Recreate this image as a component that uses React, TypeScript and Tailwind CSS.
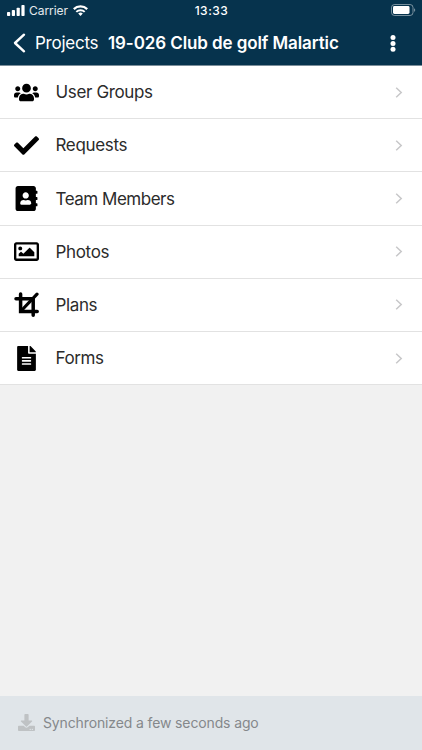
import type { ComponentType } from "react";
import { FaUsers, FaCheck, FaAddressBook, FaRegImage, FaFileAlt, FaDownload } from "react-icons/fa";

type Row = { label: string; Icon: ComponentType<{ className?: string }>; tracking: string };

function PlansIcon({ className }: { className?: string }) {
  return (
    <svg className={className} viewBox="0 0 25 25" fill="none" stroke="currentColor" strokeWidth="3.5" strokeLinecap="round">
      <path d="M6.6 2v17.4H23.2" />
      <path d="M2 6.8h17.2V23.2" />
      <path d="M23 2.2 7 19" strokeWidth="3.2" />
    </svg>
  );
}

const rows: Row[] = [
  { label: "User Groups", Icon: FaUsers, tracking: "tracking-[-0.36px]" },
  { label: "Requests", Icon: FaCheck, tracking: "tracking-[-0.34px]" },
  { label: "Team Members", Icon: FaAddressBook, tracking: "tracking-[-0.48px]" },
  { label: "Photos", Icon: FaRegImage, tracking: "tracking-[-0.34px]" },
  { label: "Plans", Icon: PlansIcon, tracking: "tracking-[-0.38px]" },
  { label: "Forms", Icon: FaFileAlt, tracking: "tracking-[-0.38px]" },
];

function StatusBar() {
  return (
    <div className="grid h-[21px] grid-cols-3 items-center pl-[7px] pr-[6px]">
      <div className="flex items-center">
        <svg className="h-[11px] w-[18px]" viewBox="0 0 18 11" fill="white">
          <rect x="0" y="7" width="3.2" height="4" rx="0.8" />
          <rect x="4.8" y="5" width="3.2" height="6" rx="0.8" />
          <rect x="9.6" y="2.7" width="3.2" height="8.3" rx="0.8" />
          <rect x="14.4" y="0" width="3.2" height="11" rx="0.8" />
        </svg>
        <span className="ml-[4px] w-[40px] pt-px text-[12px] tracking-[-0.05px] text-white/90">Carrier</span>
        <svg className="ml-[4px] h-[11px] w-[15px]" viewBox="0 0 15 11" fill="none" stroke="white">
          <path d="M0.8 4.1a9.5 9.5 0 0 1 13.4 0" strokeWidth="2.3" />
          <path d="M3.3 6.9a6 6 0 0 1 8.4 0" strokeWidth="2" />
          <path d="M7.5 10.9 5.2 8.5a3.3 3.3 0 0 1 4.6 0z" fill="white" stroke="none" />
        </svg>
      </div>
      <span className="pt-px text-center text-[12px] font-medium tracking-[0.5px] text-white">13:33</span>
      <svg className="mb-[1px] h-[12px] w-[25px] justify-self-end" viewBox="0 0 25 12" fill="none">
        <rect x="0.5" y="0.5" width="21.5" height="11" rx="3" stroke="white" strokeOpacity="0.45" />
        <rect x="2" y="2" width="16.5" height="8" rx="1.4" fill="white" />
        <path d="M23.2 4.2c1.3.5 1.3 3.1 0 3.6z" fill="white" fillOpacity="0.55" />
      </svg>
    </div>
  );
}

export default function App() {
  return (
    <div className="flex h-[750px] w-[422px] flex-col overflow-hidden bg-[#f1f1f1] font-['Inter',sans-serif]">
      <header className="h-[66px] shrink-0 border-b border-[#7b8e9a] bg-[#06334d]">
        <StatusBar />
        <div className="flex h-[44px] items-center pl-[13px] pr-[26px] text-[17px] text-white">
          <svg className="h-[20px] w-[13px]" viewBox="0 0 13 20" fill="none" stroke="white" strokeWidth="2.4" strokeLinecap="round" strokeLinejoin="round">
            <path d="M11 1.7 2 10l9 8.3" />
          </svg>
          <span className="ml-[9px] w-[73px] whitespace-nowrap pt-[2px] tracking-[-0.25px]">Projects</span>
          <h1 className="whitespace-nowrap pt-[2px] font-semibold tracking-[-0.1px]">19-026 Club de golf Malartic</h1>
          <svg className="ml-auto h-[17px] w-[6px]" viewBox="0 0 6 17" fill="white">
            <circle cx="3" cy="2.6" r="2.5" />
            <circle cx="3" cy="8.4" r="2.5" />
            <circle cx="3" cy="14.2" r="2.5" />
          </svg>
        </div>
      </header>
      <main>
        {rows.map(({ label, Icon, tracking }) => (
          <div key={label} className="flex h-[53.2px] items-center border-b border-[#e2e2e2] bg-white pl-[14px] pr-[19px]">
            <Icon className="h-[25px] w-[25px] shrink-0 text-black" />
            <span className={`ml-[16.5px] pt-[1.7px] text-[17px] text-[#2b2b2b] ${tracking}`}>{label}</span>
            <svg className="ml-auto h-[11px] w-[8px]" viewBox="0 0 8 11" fill="none" stroke="#c7c7c9" strokeWidth="1.5">
              <path d="m1.2.7 5 4.8-5 4.8" />
            </svg>
          </div>
        ))}
      </main>
      <footer className="mt-auto flex h-[54px] items-center bg-[#e0e5e9] pl-[18px]">
        <FaDownload className="mb-[2px] h-[17px] w-[17px] text-[#bfc2c4]" />
        <span className="mb-[2px] ml-[8px] text-[14px] tracking-[-0.13px] text-[#85888b]">Synchronized a few seconds ago</span>
      </footer>
    </div>
  );
}
